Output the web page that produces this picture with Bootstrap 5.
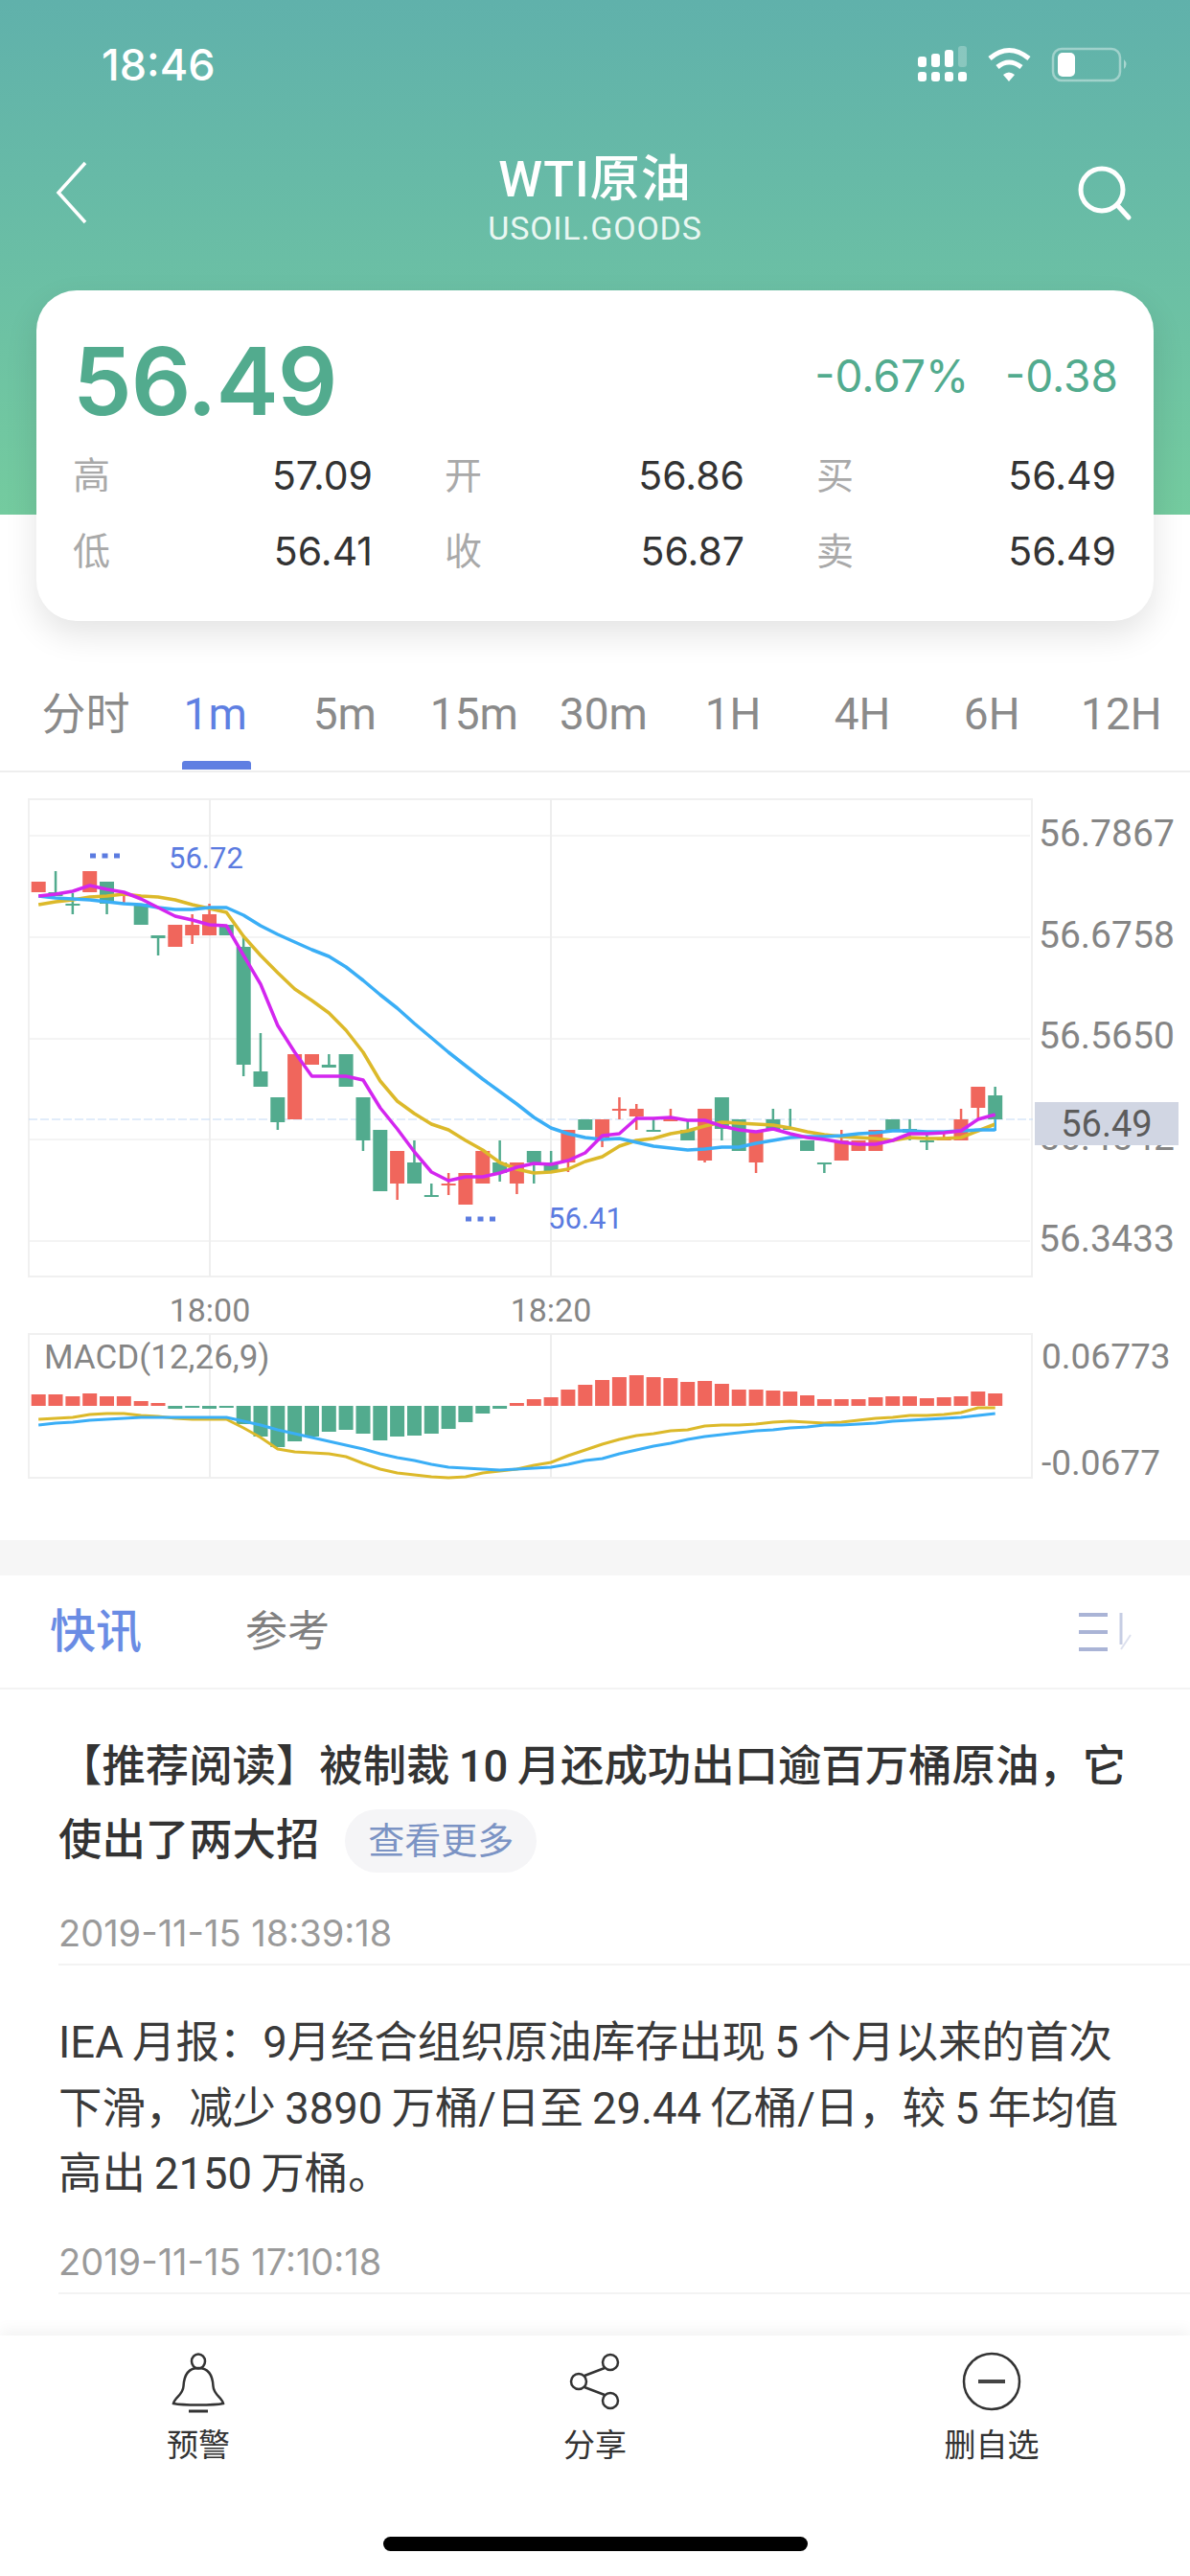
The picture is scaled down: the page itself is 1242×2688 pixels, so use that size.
<!DOCTYPE html>
<html lang="zh-CN">
<head>
    <meta charset="UTF-8">
    <meta name="viewport" content="width=device-width, initial-scale=1.0">
    <title>WTI原油</title>
    <link href="https://cdn.jsdelivr.net/npm/bootstrap@5.3.3/dist/css/bootstrap.min.css" rel="stylesheet">
    <style>
        body { margin: 0; width: 1242px; height: 2688px; overflow: hidden; font-family: Roboto, "Noto Sans CJK SC", sans-serif; color: #333; background: #fff; }
        .phone { width: 1242px; height: 2688px; }
        .hero { height: 678px; background: linear-gradient(180deg, #60b1ab 0, #74cb9f 537px) top / 100% 537px no-repeat; }
        .status-row { height: 129px; padding: 40px 0 0 106px; color: #fff; }
        .status-time { font-family: Inter, sans-serif; font-size: 45px; font-weight: 500; line-height: 50px; width: 852px; margin-top: 3px; }
        .nav-row { height: 174px; color: #fff; padding-left: 58px; padding-right: 57px; }
        .nav-back { margin: 39px 25px 0 0; }
        .nav-search { margin-top: 44px; }
        .nav-title { text-align: center; padding-top: 28px; }
        .nav-title h1 { font-size: 52px; font-weight: 500; margin: 0 0 1px; line-height: 62px; letter-spacing: 1px; }
        .nav-title div { font-size: 34px; line-height: 36px; color: #e9f7f2; letter-spacing: .8px; }
        .quote-box { margin: 0 38px; height: 345px; border: 0; border-radius: 42px; box-shadow: 0 14px 34px rgba(0,0,0,.11); padding: 46px 37px 0 38px; }
        .big-price { font-family: Inter, sans-serif; font-size: 98px; font-weight: 600; line-height: 92px; padding-top: 3px; color: #52ab8e; letter-spacing: -1px; }
        .chg { font-family: Inter, sans-serif; font-size: 46px; line-height: 60px; margin-top: 13px; color: #52ab8e; gap: 38px; }
        .quote-grid { margin-top: 22px; display: grid; grid-template-columns: repeat(3, 313px); column-gap: 75px; row-gap: 19px; }
        .qcell { line-height: 60px; font-family: Inter, "Noto Sans CJK SC", sans-serif; font-size: 41px; }
        .qcell span:first-child { color: #a9a9a9; font-size: 39px; }
        .period-tabs { height: 128px; padding: 38px 4px 0 22px; border-bottom: 2px solid #eeeeee; }
        .period-tabs a { flex: 0 0 135.1px; text-align: center; font-size: 46px; line-height: 58px; color: #8a8a8a; text-decoration: none; position: relative; }
        .period-tabs a.on { color: #5f7fe2; }
        .period-tabs a.on::after { content: ""; position: absolute; left: 33px; width: 72px; bottom: 1px; height: 9px; border-radius: 3px 3px 0 0; background: #5f7fe2; }
        .chart-svg { display: block; width: 1242px; height: 801px; }
        .chart-svg text { font-family: Roboto, sans-serif; }
        .gap-band { height: 37px; background: #f6f6f6; }
        .news-tabs { height: 119px; border-bottom: 2px solid #f3f3f3; padding: 0 60px 0 52px; }
        .news-tabs .t-on { font-size: 48px; color: #6a8ce4; font-weight: 500; width: 204px; }
        .news-tabs .t-off { font-size: 44px; color: #808080; }
        .news-list { height: 674px; padding-left: 61px; overflow: hidden; }
        .news-item { border-bottom: 2px solid #f3f3f3; }
        .news-title { font-size: 45.4px; line-height: 77px; font-weight: 500; color: #333; padding: 42px 58px 0 0; }
        .news-body { font-size: 45.4px; line-height: 68.5px; color: #3a3a3a; padding: 47px 60px 0 0; }
        .more-pill { display: inline-block; font-size: 38px; line-height: 66px; font-weight: 400; padding: 0 24px; margin-left: 27px; border-radius: 33px; color: #7b93c4; background: #f5f5f7; vertical-align: 2px; }
        .news-time { font-family: Inter, sans-serif; font-size: 38px; line-height: 44px; color: #9a9a9a; padding: 36px 0 10px; }
        .news-body + .news-time { padding-top: 34px; }
        .bottom-bar { height: 251px; box-shadow: 0 -6px 14px rgba(0,0,0,.05); position: relative; }
        .bar-btn { width: 414px; padding-top: 15px; font-size: 33px; line-height: 40px; color: #333; }
        .bar-btn svg { display: block; margin-bottom: 14px; }
        .home-pill { width: 443px; height: 15px; background: #000; border-radius: 8px; margin: 75px auto 0; }
    </style>
</head>
<body>
<div class="phone d-flex flex-column">

    <div class="hero">
        <div class="status-row d-flex">
            <div class="status-time">18:46</div>
            <svg width="244" height="60" viewBox="958 40 244 60">
                <g fill="#fff">
                    <rect x="958" y="75" width="9" height="10" rx="3"/><rect x="972" y="75" width="9" height="10" rx="3"/><rect x="986" y="75" width="9" height="10" rx="3"/><rect x="1000" y="75" width="9" height="10" rx="3"/>
                    <rect x="958" y="59" width="9" height="11" rx="3"/><rect x="972" y="56" width="9" height="14" rx="3"/><rect x="986" y="52" width="9" height="18" rx="3"/><rect x="1000" y="48" width="9" height="22" rx="3" fill-opacity=".25"/>
                    <path d="M1047 78 Q1053 73 1059 78 L1053 85Z"/>
                    <rect x="1104" y="55" width="18" height="25" rx="5"/>
                    <path d="M1173 62 Q1178 67 1173 72Z" fill-opacity=".45"/>
                </g>
                <g fill="none" stroke="#fff" stroke-width="5"><path d="M1033 61 Q1053 44 1074 61"/><path d="M1041 70 Q1053 60 1066 70"/></g>
                <rect x="1099" y="51" width="70" height="33" rx="9" fill="none" stroke="#fff" stroke-opacity=".4" stroke-width="2.5"/>
            </svg>
        </div>
        <div class="nav-row d-flex align-items-start">
            <svg class="nav-back flex-shrink-0" width="34" height="66" viewBox="0 0 34 66"><path d="M31 2 L3 33 L31 64" fill="none" stroke="#fff" stroke-width="3.5"/></svg>
            <div class="nav-title flex-grow-1">
                <h1>WTI原油</h1>
                <div>USOIL.GOODS</div>
            </div>
            <svg class="nav-search flex-shrink-0" width="60" height="60" viewBox="0 0 60 60"><circle cx="25" cy="25" r="22" fill="none" stroke="#fff" stroke-width="5"/><path d="M41 41 L53 54" stroke="#fff" stroke-width="5" stroke-linecap="round"/></svg>
        </div>
        <div class="card quote-box">
            <div class="d-flex justify-content-between">
                <div class="big-price">56.49</div>
                <div class="d-flex chg"><span>-0.67%</span><span>-0.38</span></div>
            </div>
            <div class="quote-grid">
                <div class="qcell d-flex justify-content-between"><span>高</span><span>57.09</span></div>
                <div class="qcell d-flex justify-content-between"><span>开</span><span>56.86</span></div>
                <div class="qcell d-flex justify-content-between"><span>买</span><span>56.49</span></div>
                <div class="qcell d-flex justify-content-between"><span>低</span><span>56.41</span></div>
                <div class="qcell d-flex justify-content-between"><span>收</span><span>56.87</span></div>
                <div class="qcell d-flex justify-content-between"><span>卖</span><span>56.49</span></div>
            </div>
        </div>
    </div>

    <div class="period-tabs d-flex">
        <a href="#">分时</a><a href="#" class="on">1m</a><a href="#">5m</a><a href="#">15m</a><a href="#">30m</a><a href="#">1H</a><a href="#">4H</a><a href="#">6H</a><a href="#">12H</a>
    </div>

    <svg class="chart-svg" id="chart" viewBox="0 806 1242 801"></svg>

    <div class="gap-band"></div>

    <div class="news-tabs d-flex align-items-center">
        <div class="t-on">快讯</div>
        <div class="t-off flex-grow-1">参考</div>
        <svg width="58" height="42" viewBox="0 0 58 42"><path d="M2 3H32M2 21H32M2 39H32" stroke="#aab4d6" stroke-width="4"/><path d="M46 1V34" stroke="#c6cde3" stroke-width="3"/><path d="M46 39 L56 24" stroke="#dde1ee" stroke-width="2"/></svg>
    </div>

    <div class="news-list">
        <div class="news-item">
            <div class="news-title">【推荐阅读】被制裁&#8201;10&#8201;月还成功出口逾百万桶原油，它使出了两大招<span class="more-pill">查看更多</span></div>
            <div class="news-time">2019-11-15 18:39:18</div>
        </div>
        <div class="news-item">
            <div class="news-body">IEA&#8201;月报：9月经合组织原油库存出现&#8201;5&#8201;个月以来的首次下滑，减少&#8201;3890&#8201;万桶/日至&#8201;29.44&#8201;亿桶/日，较&#8201;5&#8201;年均值高出&#8201;2150&#8201;万桶。</div>
            <div class="news-time">2019-11-15 17:10:18</div>
        </div>
    </div>

    <div class="bottom-bar bg-white">
        <div class="d-flex">
            <div class="bar-btn d-flex flex-column align-items-center">
                <svg width="60" height="66" viewBox="0 0 60 66"><ellipse cx="30" cy="12" rx="7" ry="7.5" fill="none" stroke="#333" stroke-width="2.5"/><path d="M30 19 C19 19 15 28 14.5 38 C14 47 5 50 4 56 C14 58 46 58 56 56 C55 50 46 47 45.5 38 C45 28 41 19 30 19 Z" fill="none" stroke="#333" stroke-width="2.5"/><path d="M20 64H40" stroke="#333" stroke-width="3"/></svg>
                <div>预警</div>
            </div>
            <div class="bar-btn d-flex flex-column align-items-center">
                <svg width="60" height="66" viewBox="0 0 60 66"><g fill="none" stroke="#333" stroke-width="2.5"><circle cx="46" cy="13" r="8"/><circle cx="13" cy="33" r="8"/><circle cx="46" cy="53" r="8"/><path d="M40 19 L19 27M19 39 L40 47"/></g></svg>
                <div>分享</div>
            </div>
            <div class="bar-btn d-flex flex-column align-items-center">
                <svg width="62" height="66" viewBox="0 0 62 66"><circle cx="31" cy="33" r="29" fill="none" stroke="#333" stroke-width="2.5"/><path d="M17 33H45" stroke="#444" stroke-width="4"/></svg>
                <div>删自选</div>
            </div>
        </div>
        <div class="home-pill"></div>
    </div>
</div>

<script>
    // coordinates below are page pixels, the svg viewBox starts at y=806
    const RED = "#f0665c", GREEN = "#52ab8e";
    const X = i => 40.2 + 17.83 * i;

    // [bodyTop, bodyBottom, wickTop, wickBottom, colour]
    const candles = [
        [920,931,920,931,"r"],[931,935,909,935,"g"],[943,945,932,954,"g"],[909,931,909,931,"r"],[920,943,920,954,"g"],
        [933,935,933,943,"r"],[943,965,943,965,"g"],[976,979,976,997,"g"],[965,988,965,988,"r"],[965,976,954,985,"r"],
        [954,976,943,976,"r"],[965,976,965,976,"g"],[988,1111,976,1123,"g"],[1118,1134,1078,1134,"g"],[1145,1171,1145,1179,"g"],
        [1100,1168,1100,1168,"r"],[1100,1111,1100,1111,"r"],[1111,1114,1100,1114,"g"],[1100,1134,1100,1134,"g"],[1145,1190,1145,1201,"g"],
        [1179,1243,1179,1243,"g"],[1201,1235,1201,1252,"r"],[1213,1235,1190,1235,"g"],[1247,1249,1235,1249,"g"],[1235,1237,1224,1247,"r"],
        [1224,1257,1224,1257,"r"],[1201,1235,1201,1235,"r"],[1213,1224,1190,1233,"g"],[1213,1235,1213,1246,"r"],[1201,1213,1201,1235,"g"],
        [1213,1223,1201,1223,"g"],[1179,1213,1179,1223,"r"],[1168,1179,1168,1179,"g"],[1168,1187,1168,1197,"r"],[1157,1159,1145,1168,"r"],
        [1157,1165,1152,1179,"r"],[1179,1181,1168,1181,"g"],[1167,1170,1157,1170,"r"],[1179,1190,1168,1190,"g"],[1157,1211,1157,1213,"r"],
        [1145,1178,1145,1190,"g"],[1168,1201,1168,1201,"g"],[1181,1213,1181,1224,"r"],[1168,1180,1157,1180,"g"],[1177,1179,1157,1179,"g"],
        [1190,1201,1190,1201,"g"],[1213,1215,1213,1224,"g"],[1190,1211,1179,1211,"r"],[1190,1201,1190,1201,"r"],[1179,1201,1179,1201,"r"],
        [1168,1180,1168,1180,"g"],[1178,1182,1168,1190,"g"],[1190,1192,1183,1200,"g"],[1188,1190,1183,1190,"r"],[1168,1190,1157,1190,"r"],
        [1134,1156,1134,1168,"r"],[1143,1168,1134,1179,"g"]
    ];

    const ma5 = [935,933,930,924,928,931,938,947,956,960,965,966,997,1027,1070,1098,1123,1123,1123,1127,1156,1178,1202,1223,1232,1228,1228,1224,1218,1214,1215,1211,1203,1185,1183,1167,1167,1166,1169,1169,1175,1179,1181,1178,1183,1187,1189,1192,1194,1194,1190,1183,1183,1182,1180,1168,1163];
    const ma10 = [944,941,939,936,935,933,935,936,939,944,948,952,977,997,1015,1032,1044,1057,1075,1098,1128,1149,1162,1173,1179,1190,1200,1213,1220,1224,1223,1220,1212,1207,1196,1190,1188,1183,1180,1175,1171,1172,1173,1174,1177,1181,1184,1186,1187,1188,1190,1187,1188,1188,1187,1180,1173];
    const ma20 = [935,937,938,939,941,943,944,947,949,949,947,947,955,966,975,983,991,998,1009,1023,1038,1052,1068,1083,1098,1112,1126,1139,1152,1166,1177,1183,1187,1189,1188,1192,1196,1198,1200,1199,1197,1197,1193,1190,1187,1186,1186,1185,1183,1182,1180,1180,1181,1181,1180,1179,1179];

    // macd bars, height from the zero line, negative goes down
    const macd = [12,12,10,13,10,10,5,3,-3,-2,-3,-2,-19,-32,-43,-37,-32,-27,-25,-29,-36,-32,-31,-29,-24,-17,-8,-3,3,7,9,17,22,27,30,32,30,29,25,26,23,17,17,16,15,11,7,7,7,9,10,10,8,9,10,15,13];
    const dif = [1481,1480,1479,1476,1475,1475,1477,1478,1480,1481,1481,1481,1490,1500,1512,1515,1516,1517,1520,1527,1533,1537,1539,1541,1542,1541,1537,1535,1533,1529,1526,1519,1513,1507,1502,1498,1496,1493,1492,1488,1487,1487,1486,1484,1483,1484,1485,1484,1482,1480,1479,1477,1477,1476,1474,1469,1469];
    const dea = [1487,1485,1484,1482,1481,1480,1479,1479,1479,1479,1479,1479,1483,1487,1492,1496,1500,1504,1508,1512,1517,1521,1524,1528,1531,1532,1533,1534,1533,1532,1531,1528,1524,1522,1517,1513,1509,1506,1502,1499,1497,1495,1493,1492,1490,1489,1487,1487,1486,1485,1483,1482,1481,1480,1479,1477,1475];

    const line = (ys, colour, w) => `<polyline fill="none" stroke="${colour}" stroke-width="${w}" stroke-linejoin="round" points="${ys.map((y, i) => X(i).toFixed(1) + "," + y).join(" ")}"/>`;
    const label = (x, y, txt, size, colour, anchor) => `<text x="${x}" y="${y}" font-size="${size}" fill="${colour}" text-anchor="${anchor || "start"}">${txt}</text>`;

    let svg = "";

    // grids
    [872, 978, 1084, 1189, 1295].forEach(y => { svg += `<path d="M30 ${y}H1075" stroke="#f4f4f4" stroke-width="2"/>`; });
    [[834, 1332], [1392, 1542]].forEach(p => {
        svg += `<rect x="30" y="${p[0]}" width="1047" height="${p[1] - p[0]}" fill="none" stroke="#f0f0f0" stroke-width="2"/>`;
        svg += `<path d="M219 ${p[0]}V${p[1]}M575 ${p[0]}V${p[1]}" stroke="#eeeeee" stroke-width="2"/>`;
    });
    svg += `<path d="M30 1168H1078" stroke="#c4daf5" stroke-width="1" stroke-dasharray="9 3"/>`;

    // candles
    candles.forEach((c, i) => {
        const col = c[4] === "r" ? RED : GREEN, x = X(i);
        svg += `<rect x="${(x - 1.25).toFixed(1)}" y="${c[2]}" width="2.5" height="${c[3] - c[2]}" fill="${col}"/>`;
        svg += `<rect x="${(x - 7.5).toFixed(1)}" y="${c[0]}" width="15" height="${c[1] - c[0]}" fill="${col}"/>`;
    });
    svg += line(ma10, "#dcb92a", 3.5) + line(ma20, "#3aaef6", 3.5) + line(ma5, "#d326ef", 3.5);
    svg += `<path d="M1039 1168V1179H1020" fill="none" stroke="#3aaef6" stroke-width="2"/>`;

    // high and low marks
    svg += `<path d="M94 893H125M486 1272H517" stroke="#5b7be0" stroke-width="5" stroke-dasharray="6 6.5"/>`;
    svg += label(176, 906, "56.72", 31, "#5b7be0") + label(572, 1282, "56.41", 31, "#5b7be0");

    // price axis
    [["56.7867", 883], ["56.6758", 989], ["56.5650", 1094], ["56.4542", 1200], ["56.3433", 1306]].forEach(a => { svg += label(1084, a[1], a[0], 39, "#858585"); });
    svg += `<rect x="1080" y="1150" width="150" height="45" fill="#d1d6e3"/>` + label(1155, 1186, "56.49", 38, "#5c5c5c", "middle");
    svg += label(219, 1379, "18:00", 34, "#858585", "middle") + label(575, 1379, "18:20", 34, "#858585", "middle");

    // macd
    svg += label(46, 1428, "MACD(12,26,9)", 35, "#858585");
    macd.forEach((v, i) => {
        const x = (X(i) - 7.5).toFixed(1);
        svg += v > 0 ? `<rect x="${x}" y="${1467 - v}" width="15" height="${v}" fill="${RED}"/>` : `<rect x="${x}" y="1467" width="15" height="${-v}" fill="${GREEN}"/>`;
    });
    svg += line(dif, "#dcb92a", 3) + line(dea, "#3aaef6", 3);
    svg += label(1087, 1428, "0.06773", 37, "#858585") + label(1087, 1539, "-0.0677", 37, "#858585");

    document.getElementById("chart").innerHTML = svg;
</script>
<script src="https://cdn.jsdelivr.net/npm/bootstrap@5.3.3/dist/js/bootstrap.bundle.min.js"></script>
</body>
</html>
